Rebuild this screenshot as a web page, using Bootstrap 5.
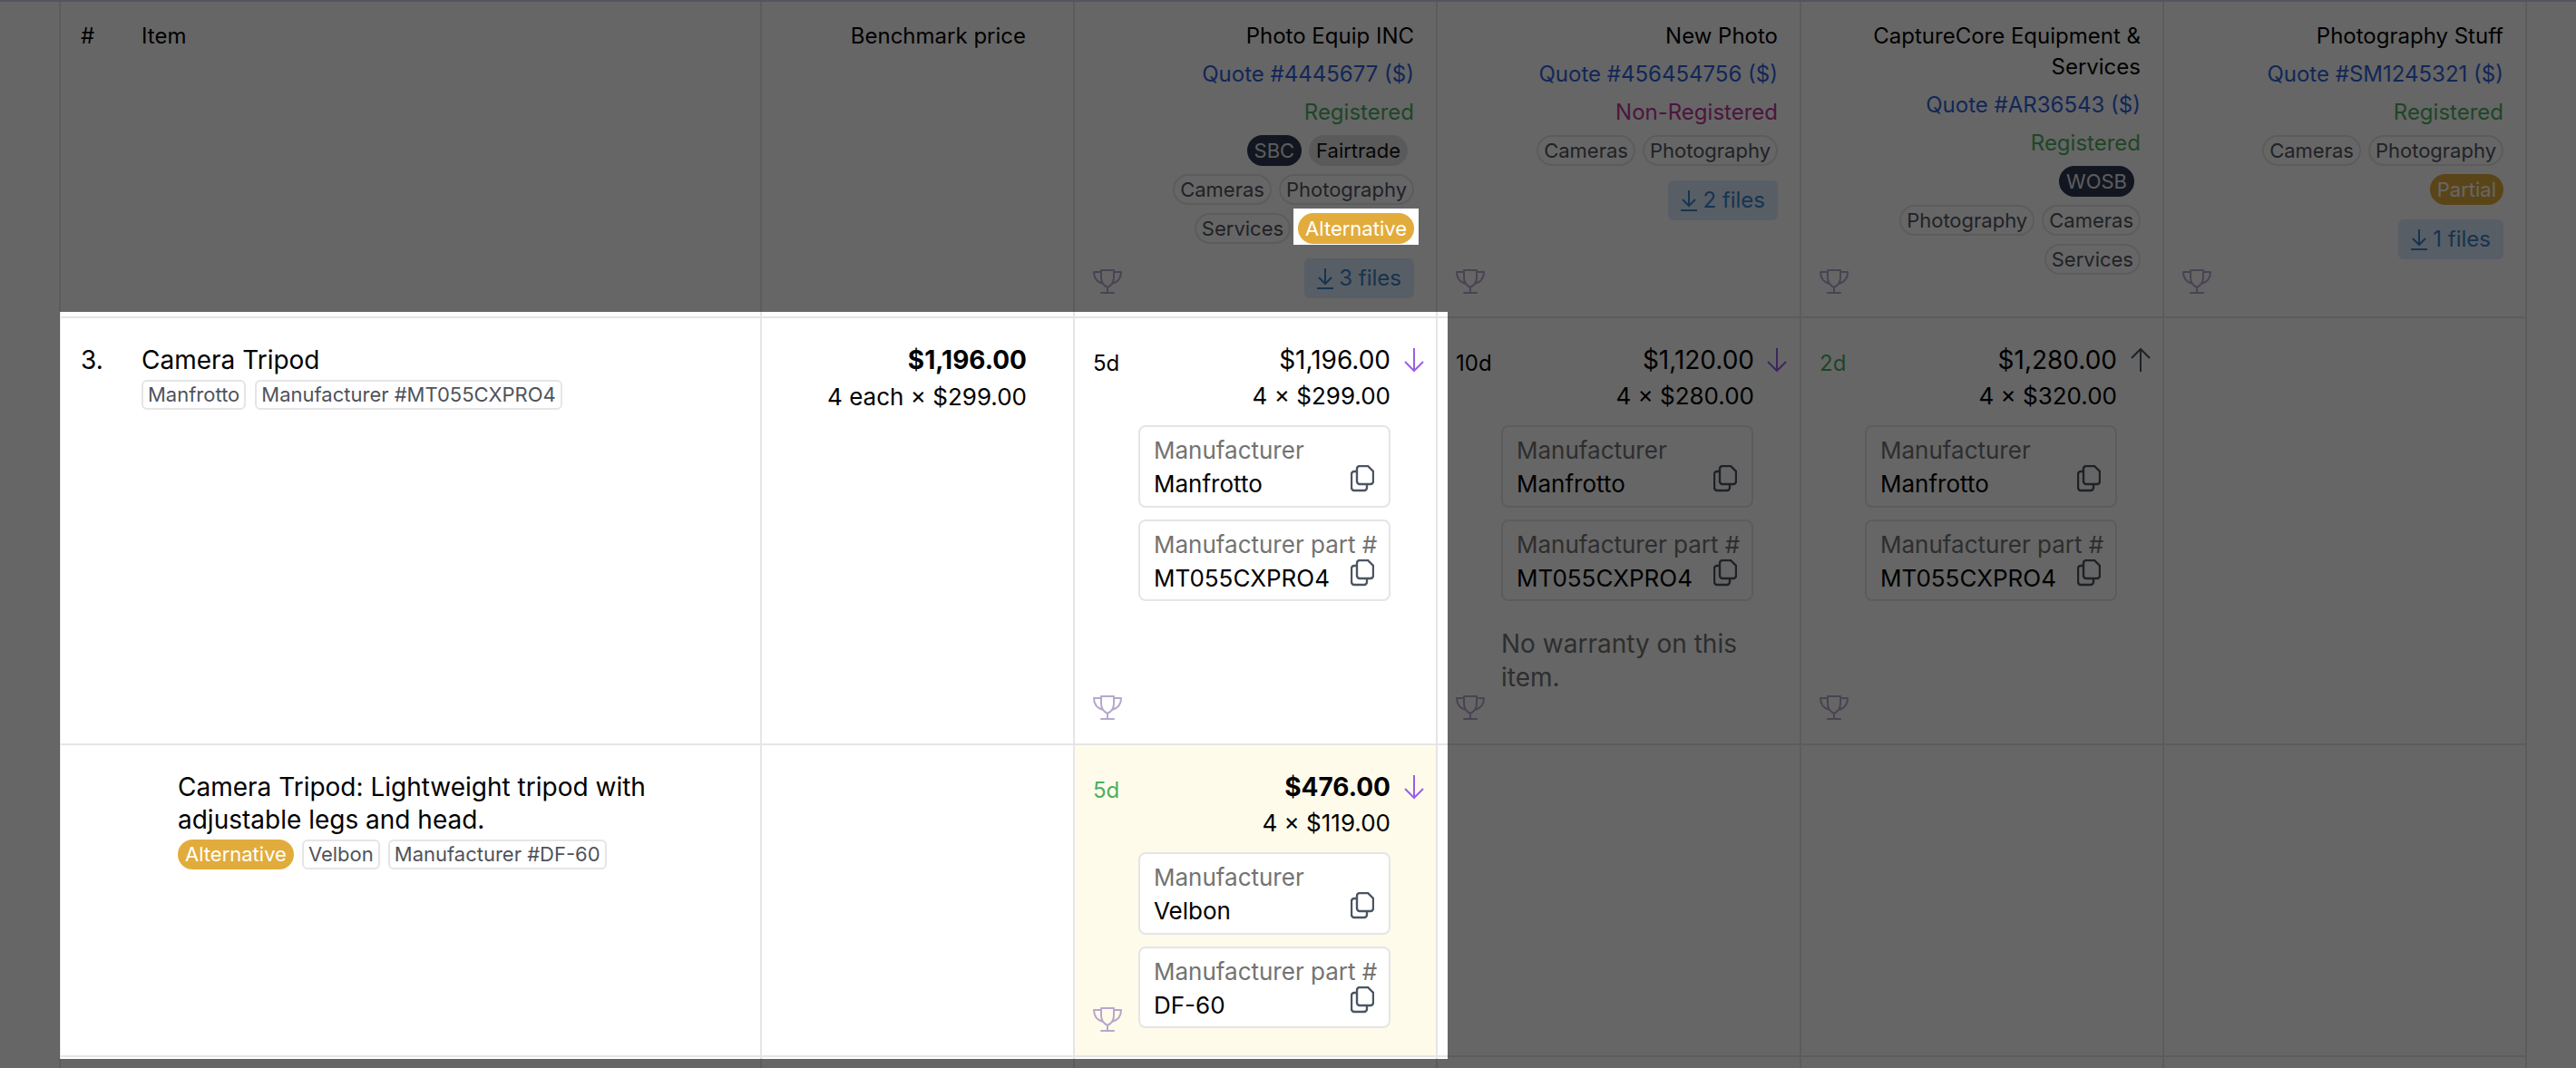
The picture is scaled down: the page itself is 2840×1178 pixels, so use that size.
<!DOCTYPE html>
<html lang="en">
<head>
<meta charset="utf-8">
<title>Quote comparison</title>
<link href="https://cdn.jsdelivr.net/npm/bootstrap@5.3.0/dist/css/bootstrap.min.css" rel="stylesheet">
<style>
html,body{margin:0;height:1178px;overflow:hidden;background:#fff}
body{font-family:Inter,"Liberation Sans",sans-serif;color:#000;font-size:28px;line-height:40px;position:relative}
.tour-mask{position:absolute;inset:0;width:2840px;height:1178px;z-index:10;pointer-events:none}
.top-strip{height:2px;background:#d5cfee}
.quote-grid{margin-left:65px;width:2721px;table-layout:fixed;border-collapse:separate;border-spacing:0;border-left:2px solid #e5e5e5}
.quote-grid th,.quote-grid td{border-right:2px solid #e5e5e5;border-bottom:2px solid #e5e5e5;vertical-align:top;padding:0;font-weight:400;position:relative}
.head-row th{height:349px;padding:21px 24px 0 0;font-size:24px;line-height:42px;text-align:right}
.quote-grid th.no-col,.quote-grid td.no-col{border-right:0;text-align:left;padding-left:22px;line-height:34px}
.quote-grid th.item-col,.quote-grid td.item-col{text-align:left;padding-left:23px;line-height:34px}
.head-row th.bench-col{padding-right:52px;line-height:34px}
.sup-name{line-height:34px;margin-bottom:4px}
.sup-quote{color:#2f62d9}
.sup-ok{color:#4caf5f}
.sup-non{color:#c0359a}
.pill-wrap{display:flex;justify-content:flex-end;column-gap:8px;padding-top:4px;margin-bottom:5px;font-size:22px;line-height:30px}
.chip{display:inline-block;height:34px;padding:0 6px;border:2px solid #e5e5e5;border-radius:17px;color:#50555f;background:#fff;white-space:nowrap}
.chip-dark{background:#2d3750;border-color:#2d3750;color:#e5e7eb}
.chip-inset{margin-right:7px}
.chip-gray{background:#e0e0e0;border-color:#e0e0e0;color:#111;margin-right:7px}
.chip-gold{background:#e2ac3c;border-color:#e2ac3c;color:#fff}
.files-btn{display:inline-flex;align-items:center;gap:6px;height:44px;padding:0 14px;border-radius:6px;background:#dbeafe;color:#3b82c4;font-size:24px;margin-top:11px}
.trophy{position:absolute;left:20px;bottom:25px;width:32px;height:28px;color:#b6a8cc}
td .trophy{bottom:26px}
.row-main td{height:471px}
.row-alt td{height:344px}
.item-name{padding-top:28px;font-size:28px;line-height:36px}
.item-tags{display:flex;gap:10px;margin-top:4px;font-size:22px;line-height:29px}
.item-tag{height:33px;padding:0 5px;border:2px solid #e5e5e5;border-radius:6px;color:#4f535b;white-space:nowrap}
.quote-grid .row-alt td.item-col{padding-left:63px}
.row-alt .item-tags{gap:9px}
.row-alt .item-name{width:600px}
.row-alt .chip{height:33px;line-height:29px}
.row-no{padding-top:28px;font-size:28px;line-height:36px}
.bench{padding:26px 51px 0 0;text-align:right}
.small-calc{font-size:26px}
.offer{padding:26px 50px 0 20px}
.offer-cream{background:#fefbeb}
.offer-top{display:flex;justify-content:space-between;height:40px;line-height:40px}
.lead-days{font-size:24px;margin-top:4px}
.lead-ok{color:#4caf5f}
.arrow-mark{position:absolute;left:362px;top:32px;width:24px;height:28px}
.arrow-down{color:#9a5fe6}
.arrow-up{color:#4b5563}
.offer-calc{text-align:right;font-size:26px}
.spec{margin:12px 0 0 50px;width:278px;height:91px;border:2px solid #e5e5e5;border-radius:8px;background:#fff;padding:7px 0 0 15px;position:relative;line-height:37px;font-size:26px}
.spec+.spec{margin-top:13px;height:90px}
.spec-label{color:#737373}
.copy-mark{position:absolute;right:16px;top:42px;width:26px;height:30px;color:#4b5563}
.no-warranty{margin:29px 0 0 50px;color:#737373;width:277px;font-size:28px;line-height:37px}
</style>
</head>
<body>
<svg width="0" height="0" class="position-absolute">
<defs>
<symbol id="t" viewBox="0 0 32 28"><path d="M9 2h14v8c0 5-3 9-7 11-4-2-7-6-7-11zM9 4H1c0 6 3 11 10 13M23 4h8c0 6-3 11-10 13M16 21v6M9 27h14" fill="none" stroke="currentColor" stroke-width="2" stroke-linejoin="round" stroke-linecap="round"/></symbol>
<symbol id="c" viewBox="0 0 26 30"><path d="M10 1h9l6 6v11a3 3 0 0 1-3 3H10a3 3 0 0 1-3-3V4a3 3 0 0 1 3-3z" fill="none" stroke="currentColor" stroke-width="2.4"/><path d="M7 7H4a3 3 0 0 0-3 3v15a3 3 0 0 0 3 3h11a3 3 0 0 0 3-3v-4" fill="none" stroke="currentColor" stroke-width="2.4"/></symbol>
<symbol id="d" viewBox="0 0 24 28"><path d="M12 1v25M2 16l10 10 10-10" fill="none" stroke="currentColor" stroke-width="2"/></symbol>
<symbol id="u" viewBox="0 0 24 28"><path d="M12 27V2M2 12 12 2l10 10" fill="none" stroke="currentColor" stroke-width="2"/></symbol>
<symbol id="f" viewBox="0 0 18 24"><path d="M9 1v16M2 11l7 7 7-7M0 23h18" fill="none" stroke="currentColor" stroke-width="2"/></symbol>
</defs>
</svg>
<div class="top-strip"></div>
<table class="quote-grid">
<colgroup><col style="width:66px"><col style="width:707px"><col style="width:345px"><col style="width:400px"><col style="width:401px"><col style="width:400px"><col style="width:400px"></colgroup>
<thead>
<tr class="head-row">
<th class="no-col">#</th><th class="item-col">Item</th><th class="bench-col">Benchmark price</th>
<th><div class="sup-name">Photo Equip INC</div><div class="sup-quote">Quote #4445677 ($)</div><div class="sup-ok">Registered</div>
<div class="pill-wrap"><span class="chip chip-dark">SBC</span><span class="chip chip-gray">Fairtrade</span></div>
<div class="pill-wrap"><span class="chip">Cameras</span><span class="chip">Photography</span></div>
<div class="pill-wrap"><span class="chip">Services</span><span class="chip chip-gold">Alternative</span></div>
<span class="files-btn"><svg width="18" height="24"><use href="#f"/></svg>3 files</span><svg class="trophy"><use href="#t"/></svg></th>
<th><div class="sup-name">New Photo</div><div class="sup-quote">Quote #456454756 ($)</div><div class="sup-non">Non-Registered</div>
<div class="pill-wrap"><span class="chip">Cameras</span><span class="chip">Photography</span></div>
<span class="files-btn"><svg width="18" height="24"><use href="#f"/></svg>2 files</span><svg class="trophy"><use href="#t"/></svg></th>
<th><div class="sup-name">CaptureCore Equipment &amp; Services</div><div class="sup-quote">Quote #AR36543 ($)</div><div class="sup-ok">Registered</div>
<div class="pill-wrap"><span class="chip chip-dark chip-inset">WOSB</span></div>
<div class="pill-wrap"><span class="chip">Photography</span><span class="chip">Cameras</span></div>
<div class="pill-wrap"><span class="chip">Services</span></div><svg class="trophy"><use href="#t"/></svg></th>
<th><div class="sup-name">Photography Stuff</div><div class="sup-quote">Quote #SM1245321 ($)</div><div class="sup-ok">Registered</div>
<div class="pill-wrap"><span class="chip">Cameras</span><span class="chip">Photography</span></div>
<div class="pill-wrap"><span class="chip chip-gold">Partial</span></div>
<span class="files-btn"><svg width="18" height="24"><use href="#f"/></svg>1 files</span><svg class="trophy"><use href="#t"/></svg></th>
</tr>
</thead>
<tbody>
<tr class="row-main">
<td class="no-col"><div class="row-no">3.</div></td>
<td class="item-col"><div class="item-name">Camera Tripod</div><div class="item-tags"><span class="item-tag">Manfrotto</span><span class="item-tag">Manufacturer #MT055CXPRO4</span></div></td>
<td><div class="bench"><b class="fw-bold">$1,196.00</b><br><span class="small-calc">4 each × $299.00</span></div></td>
<td><div class="offer"><div class="offer-top"><span class="lead-days">5d</span><span>$1,196.00</span></div><div class="offer-calc">4 × $299.00</div>
<div class="spec"><div class="spec-label">Manufacturer</div><div>Manfrotto</div><svg class="copy-mark"><use href="#c"/></svg></div>
<div class="spec"><div class="spec-label">Manufacturer part #</div><div>MT055CXPRO4</div><svg class="copy-mark"><use href="#c"/></svg></div></div>
<svg class="arrow-mark arrow-down"><use href="#d"/></svg><svg class="trophy"><use href="#t"/></svg></td>
<td><div class="offer"><div class="offer-top"><span class="lead-days">10d</span><span>$1,120.00</span></div><div class="offer-calc">4 × $280.00</div>
<div class="spec"><div class="spec-label">Manufacturer</div><div>Manfrotto</div><svg class="copy-mark"><use href="#c"/></svg></div>
<div class="spec"><div class="spec-label">Manufacturer part #</div><div>MT055CXPRO4</div><svg class="copy-mark"><use href="#c"/></svg></div>
<div class="no-warranty">No warranty on this item.</div></div>
<svg class="arrow-mark arrow-down"><use href="#d"/></svg><svg class="trophy"><use href="#t"/></svg></td>
<td><div class="offer"><div class="offer-top"><span class="lead-days lead-ok">2d</span><span>$1,280.00</span></div><div class="offer-calc">4 × $320.00</div>
<div class="spec"><div class="spec-label">Manufacturer</div><div>Manfrotto</div><svg class="copy-mark"><use href="#c"/></svg></div>
<div class="spec"><div class="spec-label">Manufacturer part #</div><div>MT055CXPRO4</div><svg class="copy-mark"><use href="#c"/></svg></div></div>
<svg class="arrow-mark arrow-up"><use href="#u"/></svg><svg class="trophy"><use href="#t"/></svg></td>
<td></td>
</tr>
<tr class="row-alt">
<td class="no-col"></td>
<td class="item-col"><div class="item-name">Camera Tripod: Lightweight tripod with adjustable legs and head.</div><div class="item-tags"><span class="chip chip-gold">Alternative</span><span class="item-tag">Velbon</span><span class="item-tag">Manufacturer #DF-60</span></div></td>
<td></td>
<td class="offer-cream"><div class="offer"><div class="offer-top"><span class="lead-days lead-ok">5d</span><b class="fw-bold">$476.00</b></div><div class="offer-calc">4 × $119.00</div>
<div class="spec"><div class="spec-label">Manufacturer</div><div>Velbon</div><svg class="copy-mark"><use href="#c"/></svg></div>
<div class="spec"><div class="spec-label">Manufacturer part #</div><div>DF-60</div><svg class="copy-mark"><use href="#c"/></svg></div></div>
<svg class="arrow-mark arrow-down"><use href="#d"/></svg><svg class="trophy"><use href="#t"/></svg></td>
<td></td><td></td><td></td>
</tr>
<tr><td class="no-col" style="height:40px"></td><td></td><td></td><td></td><td></td><td></td><td></td></tr>
</tbody>
</table>
<svg class="tour-mask" viewBox="0 0 2840 1178"><path fill="#000" fill-opacity=".6" fill-rule="evenodd" d="M0 0H2840V1178H0ZM66 344H1596V1168H66ZM1426 230H1564V270H1426Z"/></svg>
<script src="https://cdn.jsdelivr.net/npm/bootstrap@5.3.0/dist/js/bootstrap.bundle.min.js"></script>
</body>
</html>
